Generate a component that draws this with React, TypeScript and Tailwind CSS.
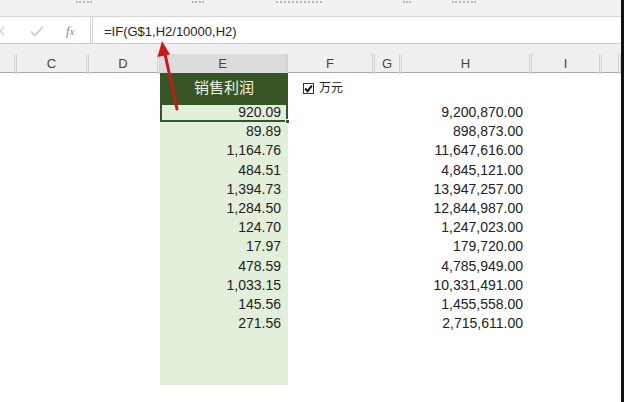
import React from 'react';

const cols = [
  { key: 'B', w: 17, label: '' },
  { key: 'C', w: 72, label: 'C' },
  { key: 'D', w: 71, label: 'D' },
  { key: 'E', w: 128, label: 'E' },
  { key: 'F', w: 87, label: 'F' },
  { key: 'G', w: 27, label: 'G' },
  { key: 'H', w: 130, label: 'H' },
  { key: 'I', w: 70, label: 'I' },
  { key: 'J', w: 19, label: '' },
];

const profit = [
  '920.09', '89.89', '1,164.76', '484.51', '1,394.73', '1,284.50',
  '124.70', '17.97', '478.59', '1,033.15', '145.56', '271.56',
];

const sales = [
  '9,200,870.00', '898,873.00', '11,647,616.00', '4,845,121.00', '13,947,257.00', '12,844,987.00',
  '1,247,023.00', '179,720.00', '4,785,949.00', '10,331,491.00', '1,455,558.00', '2,715,611.00',
];

const gridCols = 'grid grid-cols-[17px_72px_71px_128px_87px_27px_130px_70px_19px]';

// bits of the ribbon labels that peek out at the very top of the crop
const ribbonBits = [
  { left: 'left-[76px]', w: 'w-[16px]' },
  { left: 'left-[192px]', w: 'w-[12px]' },
  { left: 'left-[276px]', w: 'w-[46px]' },
  { left: 'left-[403px]', w: 'w-[8px]' },
  { left: 'left-[452px]', w: 'w-[24px]' },
];

export default function App() {
  return (
    <div
      className="relative w-[624px] h-[402px] overflow-hidden bg-white flex"
      style={{ fontFamily: '"Liberation Sans", "Noto Sans CJK SC", sans-serif' }}
    >
      <div className="flex-1 flex flex-col">
        {/* ribbon remnant */}
        <div className="relative h-[17px] bg-[#f1f1f1] border-b border-[#d6d6d6] overflow-hidden">
          {ribbonBits.map((b) => (
            <div
              key={b.left}
              className={`absolute top-0 ${b.left} ${b.w} h-[3px] border-b-2 border-dotted border-[#b8b8b8]`}
            />
          ))}
        </div>

        {/* formula bar */}
        <div className="h-[27px] flex items-center border-b border-[#d0d0d0] bg-white">
          <div className="w-[90px] h-full flex items-center pt-[2px]">
            <svg width="8" height="10" viewBox="0 0 8 10">
              <path d="M-4 1 L4 9 M4 1 L-4 9" fill="none" stroke="#c8c8c8" strokeWidth="1.2" />
            </svg>
            <svg className="ml-[22px]" width="14" height="12" viewBox="0 0 14 12">
              <path d="M1 6.5 L5 10.5 L13 1.5" fill="none" stroke="#c4c4c4" strokeWidth="1.4" />
            </svg>
            <span className="ml-[22px] text-[13px] italic text-[#8a8a8a]" style={{ fontFamily: '"Liberation Serif", serif' }}>
              f<span className="text-[10px]">x</span>
            </span>
          </div>
          <div className="h-full border-l-[3px] border-double border-[#d6d6d6]" />
          <div className="pl-[11px] pt-[3px] text-[13px] text-[#262626]">=IF(G$1,H2/10000,H2)</div>
        </div>

        {/* column headers */}
        <div className="bg-[#efefef] pt-[10px] border-b border-[#a9a9a9]">
          <div className={`${gridCols} h-[18px]`}>
            {cols.map((c) => (
              <div
                key={c.key}
                className={`flex items-center justify-center text-[13px] text-[#444] border-r-[3px] border-double border-[#d2d2d2] ${
                  c.key === 'E' ? 'bg-[#dcdcdc] text-[#3a6e2f]' : ''
                } ${c.key === 'J' ? 'border-r-0' : ''}`}
              >
                {c.label}
              </div>
            ))}
          </div>
        </div>

        {/* sheet body */}
        <div className={`${gridCols} flex-1`}>
          <div />
          <div />
          <div />
          {/* column E */}
          <div className="flex flex-col">
            <div className="h-[30px] bg-[#375623] flex items-center justify-center text-[15px] text-[#eef3ea]">
              销售利润
            </div>
            <div className="h-[282px] bg-[#e2efda] flex flex-col">
              {profit.map((v, i) => (
                <div
                  key={v}
                  className={`relative h-[19.2px] flex items-center justify-end text-[14px] text-[#222] ${
                    i === 0 ? 'border-2 border-[#2e5a27] pr-[5px]' : 'pr-[7px]'
                  }`}
                >
                  {v}
                  {i === 0 && (
                    <span className="absolute right-[-4px] bottom-[-4px] w-[5px] h-[5px] bg-[#2e5a27] border border-white" />
                  )}
                </div>
              ))}
            </div>
          </div>
          {/* column F with checkbox */}
          <div className="flex flex-col">
            <div className="h-[30px] flex items-center pl-[15px] gap-[5px] text-[12px] text-[#222]">
              <span className="w-[11px] h-[11px] border border-[#333] flex items-center justify-center">
                <svg width="9" height="9" viewBox="0 0 8 8">
                  <path d="M1 4 L3.2 6.3 L7 1.5" fill="none" stroke="#111" strokeWidth="1.8" />
                </svg>
              </span>
              万元
            </div>
          </div>
          <div />
          {/* column H */}
          <div className="flex flex-col">
            <div className="h-[30px]" />
            {sales.map((v) => (
              <div key={v} className="h-[19.2px] flex items-center justify-end pr-[9px] text-[14px] text-[#222]">
                {v}
              </div>
            ))}
          </div>
          <div />
          <div />
        </div>
      </div>

      {/* window edge */}
      <div className="w-[3px] h-full bg-[#111]" />

      {/* red annotation arrow */}
      <svg className="absolute left-0 top-0 pointer-events-none" width="624" height="402">
        <line x1="177" y1="109" x2="165" y2="54" stroke="#c8191b" strokeWidth="3" strokeLinecap="round" />
        <polygon points="162,41 157.5,57 170,54.5" fill="#c8191b" />
      </svg>
    </div>
  );
}
